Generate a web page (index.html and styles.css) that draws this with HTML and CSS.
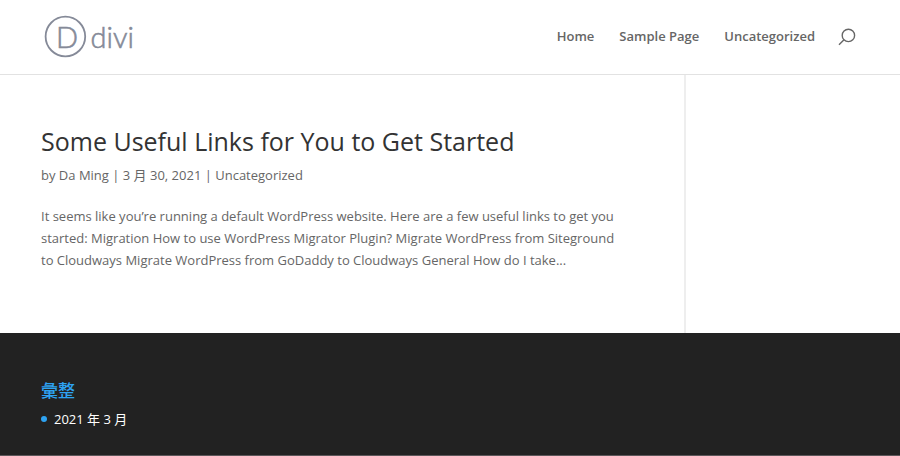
FILE: index.html
```html
<!DOCTYPE html>
<html lang="zh-TW">
<head>
<meta charset="utf-8">
<meta name="viewport" content="width=device-width, initial-scale=1">
<title>Divi</title>
<link rel="stylesheet" href="styles.css">
</head>
<body>
<header class="site-header">
  <a class="logo" href="#">
    <svg class="logo-mark" viewBox="0 0 90 45" role="img" aria-label="Divi">
      <circle class="logo-ring" cx="21.4" cy="22.5" r="19.8"/>
      <text class="logo-letter" x="12" y="33.5">D</text>
      <text class="logo-word" x="46.5" y="33.5">divi</text>
    </svg>
  </a>
  <nav class="top-nav">
    <a href="#">Home</a>
    <a href="#">Sample Page</a>
    <a href="#">Uncategorized</a>
    <button class="search" type="button" aria-label="Search">
      <svg viewBox="0 0 18 18"><circle cx="10.4" cy="8.4" r="6.2"/><path d="M6 12.8 1 17.8"/></svg>
    </button>
  </nav>
</header>
<div class="content">
  <main class="posts">
    <article>
      <h2><a href="#">Some Useful Links for You to Get Started</a></h2>
      <p class="meta">by <a href="#">Da Ming</a> | 3 月 30, 2021 | <a href="#">Uncategorized</a></p>
      <p class="excerpt">It seems like you’re running a default WordPress website. Here are a few useful links to get you started: Migration How to use WordPress Migrator Plugin? Migrate WordPress from Siteground to Cloudways Migrate WordPress from GoDaddy to Cloudways General How do I take...</p>
    </article>
  </main>
  <aside class="sidebar"></aside>
</div>
<footer class="site-footer">
  <h4>彙整</h4>
  <ul>
    <li><a href="#">2021 年 3 月</a></li>
  </ul>
</footer>
</body>
</html>
```
FILE: styles.css
```css
* {
  box-sizing: border-box;
}

body {
  margin: 0;
  background: #fff;
  color: #666;
  font: 13px/22px "Open Sans", "Noto Sans CJK TC", sans-serif;
}

a {
  color: inherit;
  text-decoration: none;
}

h2,
h4,
p,
ul {
  margin: 0;
  padding: 0;
  font-weight: 400;
}

.site-header {
  display: flex;
  justify-content: space-between;
  align-items: flex-start;
  padding: 14px 44px 15px;
  border-bottom: 1px solid #e2e2e2;
}

.logo-mark {
  display: block;
  width: 90px;
  height: 45px;
}

.logo-ring {
  fill: none;
  stroke: #858a98;
  stroke-width: 1.8;
}

.logo-letter,
.logo-word {
  fill: #858a98;
  stroke: #858a98;
  stroke-width: 0.6;
  font-family: Lato, sans-serif;
  font-weight: 300;
  font-size: 29px;
}

.top-nav {
  display: flex;
  align-items: center;
  gap: 25px;
  padding-top: 11px;
  font-weight: 600;
}

.search {
  width: 18px;
  height: 18px;
  margin-left: -2px;
  padding: 0;
  border: 0;
  background: none;
}

.search svg {
  display: block;
  overflow: visible;
  fill: none;
  stroke: #666;
  stroke-width: 1.4;
}

.content {
  display: grid;
  grid-template-columns: 76.2% 1fr;
}

.posts {
  padding: 51px 54px 62px 41px;
  border-right: 2px solid #eee;
}

h2 {
  margin-bottom: 8px;
  color: #333;
  font-size: 25px;
  line-height: 30px;
}

.meta {
  margin-bottom: 19px;
}

.site-footer {
  padding: 47px 41px 25px;
  border-bottom: 1px solid #5c575a;
  background: #222;
  color: #fff;
}

h4 {
  margin-bottom: 6px;
  color: #2ea3f2;
  font-size: 17px;
  font-weight: 500;
}

ul {
  list-style: none;
}

li {
  display: flex;
  align-items: center;
  gap: 7px;
}

li::before {
  width: 6px;
  height: 6px;
  border-radius: 50%;
  background: #2ea3f2;
  content: "";
}
```
